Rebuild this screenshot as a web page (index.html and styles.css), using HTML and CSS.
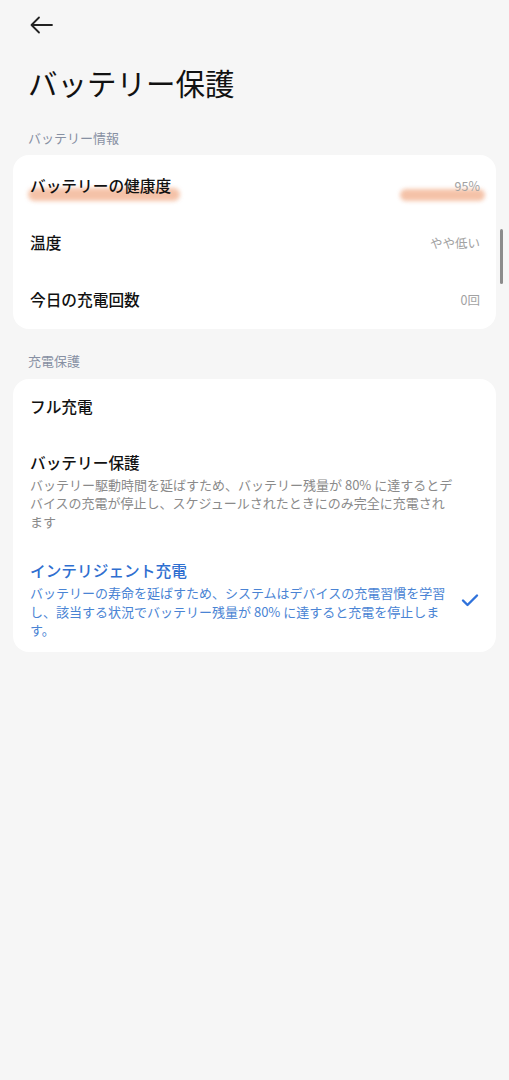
FILE: index.html
```html
<!DOCTYPE html>
<html>
<head>
    <title>バッテリー保護</title>
    <link rel="stylesheet" href="styles.css">
</head>
<body>
    <div class="header">
        <svg class="back" width="26" height="26" viewBox="0 0 26 26">
            <path d="M24 13H3.5M11 5.5L3.5 13L11 20.5" fill="none" stroke="#222" stroke-width="1.8" stroke-linecap="round" stroke-linejoin="round"/>
        </svg>
    </div>

    <h1 class="title">バッテリー保護</h1>

    <div class="section-label">バッテリー情報</div>
    <div class="card info-card">
        <div class="row">
            <span class="row-title marked">バッテリーの健康度</span>
            <span class="row-value marked wide">95%</span>
        </div>
        <div class="row">
            <span class="row-title">温度</span>
            <span class="row-value">やや低い</span>
        </div>
        <div class="row">
            <span class="row-title">今日の充電回数</span>
            <span class="row-value">0回</span>
        </div>
    </div>

    <div class="section-label second">充電保護</div>
    <div class="card option-card">
        <div class="option">
            <div class="option-text">
                <div class="row-title">フル充電</div>
            </div>
        </div>
        <div class="option with-desc">
            <div class="option-text">
                <div class="row-title">バッテリー保護</div>
                <div class="option-desc">バッテリー駆動時間を延ばすため、バッテリー残量が 80% に達するとデバイスの充電が停止し、スケジュールされたときにのみ完全に充電されます</div>
            </div>
        </div>
        <div class="option with-desc selected">
            <div class="option-text">
                <div class="row-title">インテリジェント充電</div>
                <div class="option-desc">バッテリーの寿命を延ばすため、システムはデバイスの充電習慣を学習し、該当する状況でバッテリー残量が 80% に達すると充電を停止します。</div>
            </div>
            <div class="option-check">
                <svg width="18" height="14" viewBox="0 0 18 14">
                    <path d="M2 7.5L6.5 12L16 2.5" fill="none" stroke="#2f72db" stroke-width="2.4" stroke-linecap="round" stroke-linejoin="round"/>
                </svg>
            </div>
        </div>
    </div>

    <div class="scrollbar"></div>
</body>
</html>
```

FILE: styles.css
```css
body {
    margin: 0;
    background-color: #f6f6f6;
    font-family: "Noto Sans CJK JP", "Noto Sans", sans-serif;
    color: #111;
    min-height: 1080px;
}
.header {
    height: 50px;
    padding-left: 28px;
    display: flex;
    align-items: center;
}
.back {
    display: block;
}
.title {
    margin: 12px 0 0 28px;
    font-size: 29.5px;
    font-weight: 400;
    line-height: 40px;
    color: #111;
}
.section-label {
    margin: 27px 0 8px 28px;
    font-size: 13px;
    line-height: 18px;
    color: #8790a3;
}
.section-label.second {
    margin-top: 23px;
    margin-bottom: 9px;
}
.card {
    margin: 0 13px;
    background-color: #fff;
    border-radius: 16px;
}
.info-card {
    padding: 2.5px 0 0;
}
.row {
    height: 57px;
    padding: 0 16px 0 17px;
    display: flex;
    align-items: center;
    justify-content: space-between;
}
.row-title {
    font-size: 15.7px;
    font-weight: 500;
    line-height: 22px;
    color: #111;
}
.row-value {
    font-size: 12.5px;
    line-height: 18px;
    color: #a2a2a2;
}
.marked {
    position: relative;
    isolation: isolate;
}
.marked::before {
    content: "";
    position: absolute;
    left: -2px;
    right: -9px;
    bottom: -4px;
    height: 13px;
    border-radius: 7px;
    background-color: #f3b899;
    filter: blur(2px);
    opacity: 0.85;
    z-index: -1;
}
.marked.wide::before {
    left: -55px;
    right: -5px;
    bottom: -6px;
    height: 12px;
}
.option {
    display: flex;
    align-items: center;
    padding: 17px 0 17px 17px;
}
.option.with-desc {
    padding-bottom: 12px;
}
.option-text {
    width: 424px;
}
.option-desc {
    margin-top: 2px;
    font-size: 13px;
    line-height: 18.5px;
    color: #8a8a8a;
}
.selected .row-title {
    color: #2f6fd0;
}
.selected .option-desc {
    color: #4a84d4;
}
.option-check {
    width: 32px;
    display: flex;
    justify-content: center;
}
.scrollbar {
    position: absolute;
    top: 229px;
    right: 6px;
    width: 3px;
    height: 55px;
    border-radius: 2px;
    background-color: #8c8c8c;
}
```
